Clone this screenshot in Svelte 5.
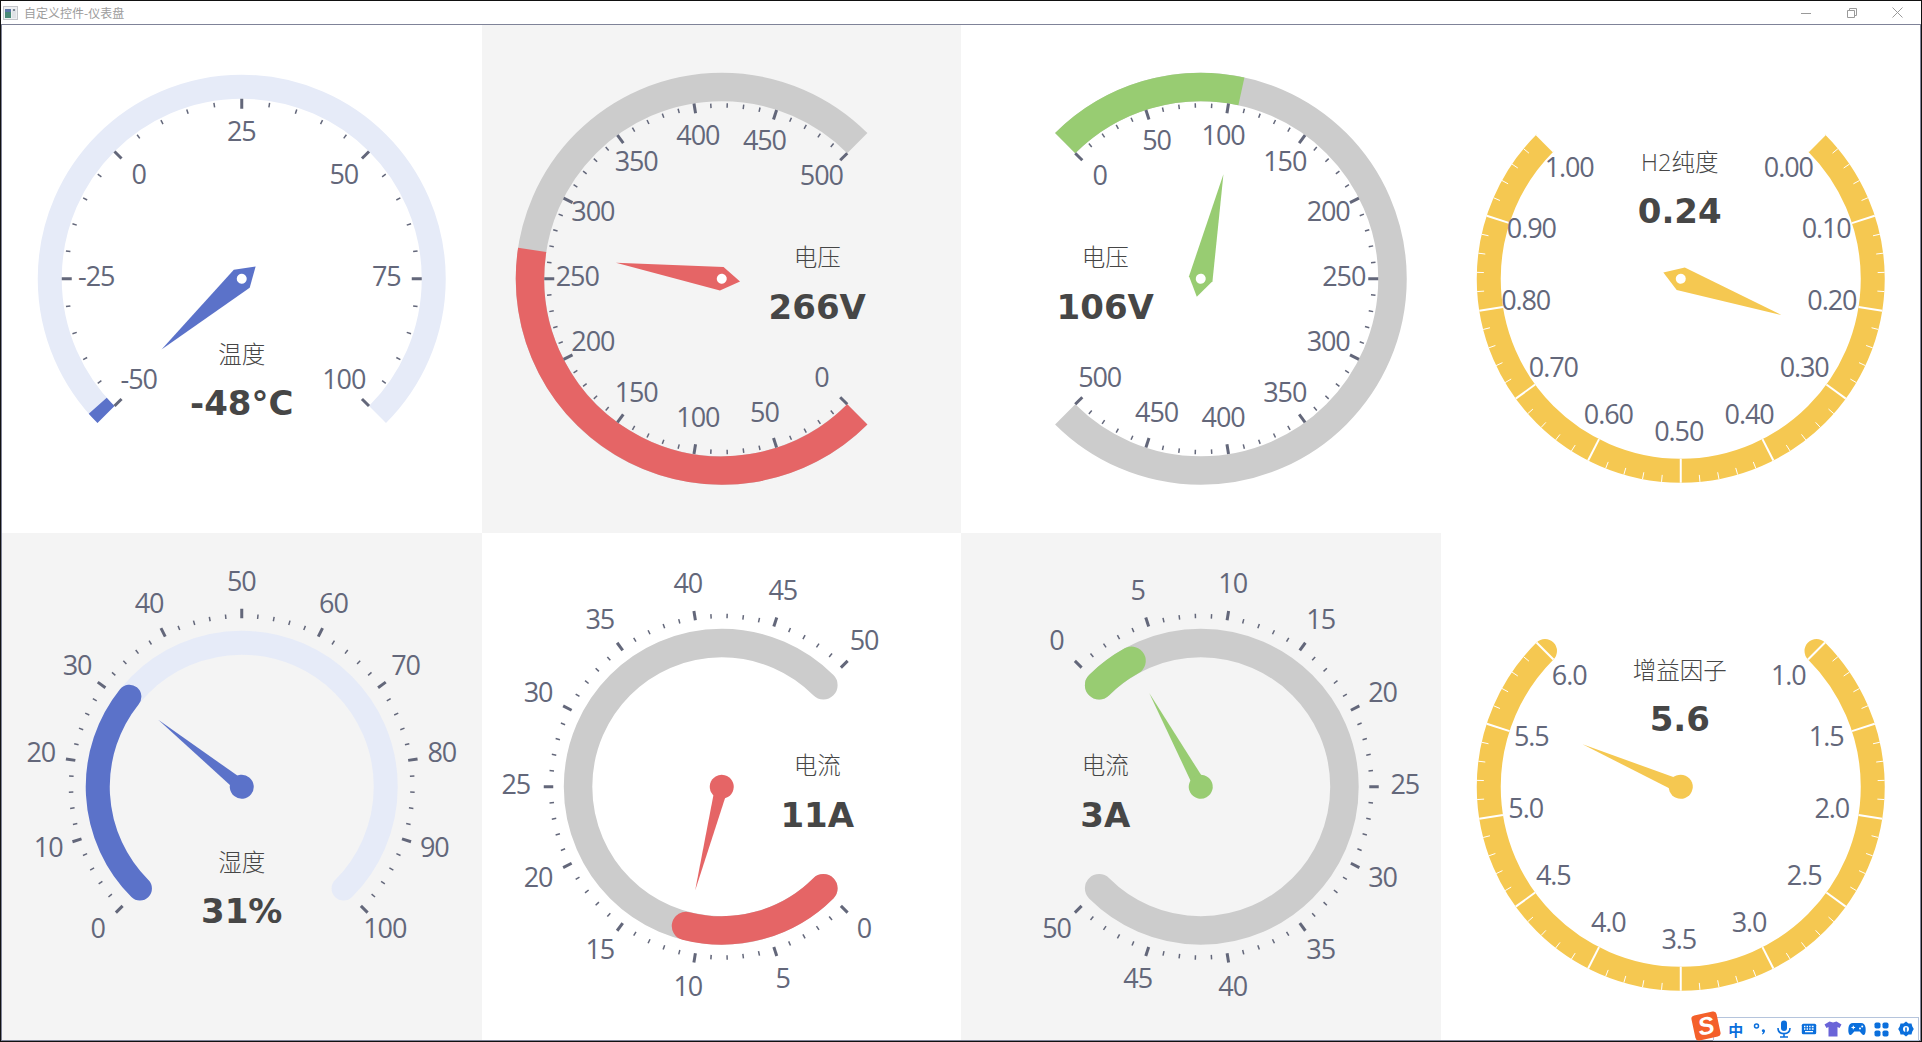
<script lang="ts">
  const CX = 239.75;
  const CY = 253.75;
  const BLUE = '#5b72c9';
  const RED = '#e56566';
  const GREEN = '#98cc72';
  const YELLOW = '#f5c851';
  const GRAY = '#cccccc';
  const PALE = '#e6ebf8';

  const gauges = [
    { title: '温度', text: '-48°C', value: -48, min: -50, max: 100, split: 6, start: 225, color: BLUE, track: PALE, radius: 192, width: 24, labelR: 145, labelDx: -0.5, ticks: 'in', pointer: 'arrow', place: 'bottom' },
    { title: '电压', text: '266V', value: 266, min: 0, max: 500, split: 10, start: -45, color: RED, track: GRAY, radius: 191.75, width: 28.5, labelR: 143, labelDx: -1.5, ticks: 'in', pointer: 'arrow', place: 'right', shaded: true },
    { title: '电压', text: '106V', value: 106, min: 0, max: 500, split: 10, start: 135, color: GREEN, track: GRAY, radius: 191.75, width: 28.5, labelR: 143, labelDx: 0, ticks: 'in', pointer: 'arrow', place: 'left' },
    { title: 'H2纯度', text: '0.24', value: 0.24, min: 0, max: 1, split: 10, start: 45, color: YELLOW, track: YELLOW, radius: 192, width: 24, labelR: 155, labelDx: -2, ticks: 'band', pointer: 'arrow', place: 'top', digits: 2 },
    { title: '湿度', text: '31%', value: 31, min: 0, max: 100, split: 10, start: 225, color: BLUE, track: PALE, radius: 144, width: 24, labelR: 203, labelDx: -0.5, ticks: 'out', pointer: 'needle', place: 'bottom', round: true, shaded: true },
    { title: '电流', text: '11A', value: 11, min: 0, max: 50, split: 10, start: -45, color: RED, track: GRAY, radius: 143.7, width: 28.5, labelR: 204, labelDx: -2, ticks: 'out', pointer: 'needle', place: 'right', round: true },
    { title: '电流', text: '3A', value: 3, min: 0, max: 50, split: 10, start: 135, color: GREEN, track: GRAY, radius: 143.7, width: 28.5, labelR: 204, labelDx: 0, ticks: 'out', pointer: 'needle', place: 'left', round: true, shaded: true },
    { title: '增益因子', text: '5.6', value: 5.6, min: 1, max: 6, split: 10, start: 45, color: YELLOW, track: YELLOW, radius: 192, width: 24, labelR: 155, labelDx: -2, ticks: 'band', pointer: 'needle', place: 'top', round: true, digits: 1 }
  ];

  const places = {
    bottom: { x: 0, title: 75, value: 124 },
    right: { x: 95.5, title: -21.5, value: 28 },
    left: { x: -95.5, title: -21.5, value: 28 },
    top: { x: -1, title: -117, value: -68 }
  };

  const polar = (r, deg) => {
    const a = (deg * Math.PI) / 180;
    return { x: CX + r * Math.cos(a), y: CY - r * Math.sin(a) };
  };

  const angleOf = (g, v) => g.start - ((v - g.min) / (g.max - g.min)) * 270;

  function arc(r, from, to) {
    const a = polar(r, from);
    const b = polar(r, to);
    const large = from - to > 180 ? 1 : 0;
    return `M${a.x} ${a.y}A${r} ${r} 0 ${large} 1 ${b.x} ${b.y}`;
  }

  // tick ranges per style: [inner, outer] radius
  const tickRange = (g, major) => {
    if (g.ticks === 'band') return major ? [180, 204] : [197, 204];
    if (g.ticks === 'out') return major ? [168.5, 178] : [168.5, 173];
    const edge = g.radius - g.width / 2;
    return major ? [edge - 10, edge] : [edge - 6.5, edge - 2];
  };

  function ticks(g) {
    const out = [];
    const total = g.split * 5;
    for (let i = 0; i <= total; i++) {
      const deg = g.start - (i / total) * 270;
      const major = i % 5 === 0;
      const [r0, r1] = tickRange(g, major);
      const a = polar(r0, deg);
      const b = polar(r1, deg);
      out.push({ a, b, major });
    }
    return out;
  }

  function labels(g) {
    const out = [];
    for (let i = 0; i <= g.split; i++) {
      const v = g.min + ((g.max - g.min) * i) / g.split;
      const p = polar(g.labelR, g.start - (i / g.split) * 270);
      out.push({ x: p.x + g.labelDx, y: p.y - 3, text: v.toFixed(g.digits ?? 0) });
    }
    return out;
  }

  const imeKeys = ['zh', 'punct', 'mic', 'keyboard', 'shirt', 'pad', 'apps', 'gear'];
</script>

<div class="window">
  <header class="titlebar">
    <div class="app-title">
      <svg class="app-icon" width="15" height="14" viewBox="0 0 15 14">
        <rect x="0.5" y="0.5" width="14" height="13" fill="#eef0f2" stroke="#c4c6ca" />
        <rect x="2" y="3" width="6" height="9" fill="#4a8a78" />
        <rect x="2" y="3" width="6" height="3" fill="#5b78a8" />
        <rect x="9" y="3" width="4" height="9" fill="#dfe2e6" />
        <rect x="10" y="3" width="2" height="2" fill="#7a8794" />
      </svg>
      <span>自定义控件-仪表盘</span>
    </div>
    <div class="controls">
      <svg width="10" height="10" viewBox="0 0 10 10"><path d="M0 5.5h10" stroke="#9a9a9a" /></svg>
      <svg width="10" height="10" viewBox="0 0 10 10" fill="none" stroke="#9a9a9a"><path d="M0.5 2.5h7v7h-7zM2.5 2.5v-2h7v7h-2" /></svg>
      <svg width="11" height="11" viewBox="0 0 11 11"><path d="M0.5 0.5l10 10M10.5 0.5l-10 10" stroke="#9a9a9a" /></svg>
    </div>
  </header>

  <main class="board">
    {#each gauges as g}
      {@const deg = angleOf(g, g.value)}
      {@const end = g.start - 270}
      {@const place = places[g.place]}
      <section class="cell" class:shaded={g.shaded}>
        <svg viewBox="0 0 479.5 507.5">
          <path d={arc(g.radius, g.start, end)} fill="none" stroke={g.track} stroke-width={g.width} stroke-linecap={g.round ? 'round' : 'butt'} />
          {#if g.ticks !== 'band'}
            <path d={arc(g.radius, g.start, deg)} fill="none" stroke={g.color} stroke-width={g.width} stroke-linecap={g.round ? 'round' : 'butt'} />
          {/if}

          {#each ticks(g) as t}
            <line
              x1={t.a.x} y1={t.a.y} x2={t.b.x} y2={t.b.y}
              class={g.ticks === 'band' ? 'tick-white' : 'tick'}
              stroke-width={g.ticks === 'band' ? (t.major ? 2 : 1) : (t.major ? 3 : 1.5)}
            />
          {/each}

          {#each labels(g) as l}
            <text class="label" x={l.x} y={l.y}>{l.text}</text>
          {/each}

          <g transform="translate({CX} {CY}) rotate({90 - deg})" fill={g.color}>
            {#if g.pointer === 'arrow'}
              <polygon points="0,-107 12,0 0,18.5 -12,0" />
              <circle r="5" fill="#fff" />
            {:else}
              <polygon points="0,-107 6,-10 -6,-10" />
              <circle r="12" />
            {/if}
          </g>

          <text class="title" x={CX + place.x} y={CY + place.title}>{g.title}</text>
          <text class="value" x={CX + place.x} y={CY + place.value}>{g.text}</text>
        </svg>
      </section>
    {/each}
  </main>

  <aside class="ime">
    <svg class="ime-logo" width="28" height="28" viewBox="0 0 24 24">
      <rect x="1" y="1" width="22" height="22" rx="3" fill="#f4602a" />
      <text x="12" y="19" class="ime-s">S</text>
    </svg>
    <div class="ime-bar">
      {#each imeKeys as key}
        <span class="ime-key">
          {#if key === 'zh'}
            <span class="ime-zh">中</span>
          {:else if key === 'punct'}
            <svg width="16" height="16" viewBox="0 0 16 16" fill="#0b6fdc">
              <circle cx="4.5" cy="5" r="2" fill="none" stroke="#0b6fdc" stroke-width="1.5" />
              <path d="M10.5 8.5c1.5-.6 3 .5 2.4 2.2-.4 1.2-1.3 2.2-2.5 2.9l-.5-.7c.7-.6 1.1-1.1 1.2-1.8-1.2.1-1.9-1.9-.6-2.6z" />
            </svg>
          {:else if key === 'mic'}
            <svg width="16" height="18" viewBox="0 0 16 18" fill="none" stroke="#0b6fdc" stroke-width="1.6">
              <rect x="5" y="0.5" width="6" height="10.5" rx="3" fill="#0b6fdc" stroke="none" />
              <path d="M2 8c0 3.6 2.6 5.6 6 5.6s6-2 6-5.6M8 13.6v3M4 17h8" />
            </svg>
          {:else if key === 'keyboard'}
            <svg width="16" height="12" viewBox="0 0 16 12">
              <rect x="0.8" y="0.8" width="14.4" height="10.4" rx="1.5" fill="#0b6fdc" />
              <path d="M3 3.5h1.4M5.6 3.5H7M8.2 3.5h1.4M10.8 3.5h1.8M3 6h1.4M5.6 6H7M8.2 6h1.4M10.8 6h1.8M4 8.6h8" stroke="#fff" stroke-width="1.3" />
            </svg>
          {:else if key === 'shirt'}
            <svg width="18" height="16" viewBox="0 0 18 16">
              <path d="M5.5 0.5l3.5 1 3.5-1 5 3-2 3.5-2-1v9.5h-9V6l-2 1-2-3.5z" fill="#6a64d8" />
            </svg>
          {:else if key === 'pad'}
            <svg width="18" height="14" viewBox="0 0 18 14">
              <path d="M5 1h8c2.6 0 4.2 2 4.5 4.5.3 2.6.4 7-1.8 7.5-1.7.3-2.7-2.5-4-3.5h-5.400c-1.3 1-2.3 3.800-4 3.500C.1 12.500.2 8.100.5 5.500.8 3 2.400 1 5 1z" fill="#0b6fdc" />
              <path d="M3.5 5.5h3.6M5.3 3.7v3.6" stroke="#fff" stroke-width="1.1" />
              <circle cx="12" cy="6.5" r="1" fill="#fff" />
              <circle cx="14.2" cy="4.5" r="1" fill="#fff" />
            </svg>
          {:else if key === 'apps'}
            <svg width="15" height="15" viewBox="0 0 15 15" fill="#0b6fdc">
              <rect x="0.5" y="0.5" width="6" height="6" rx="1.8" />
              <rect x="8.5" y="0.5" width="6" height="6" rx="1.8" />
              <rect x="0.5" y="8.5" width="6" height="6" rx="1.8" />
              <rect x="8.5" y="8.5" width="6" height="6" rx="1.8" />
            </svg>
          {:else}
            <svg width="16" height="16" viewBox="0 0 16 16">
              <path d="M8 0.5l2.5 2h3l.8 3 1.5 2.5-1.5 2.5-.8 3h-3L8 15.5l-2.5-2h-3l-.8-3L.2 8l1.5-2.5.8-3h3z" fill="#0b6fdc" />
              <circle cx="8" cy="8" r="3" fill="#fff" />
              <path d="M8 6.5v6" stroke="#0b6fdc" stroke-width="1.6" />
            </svg>
          {/if}
        </span>
      {/each}
    </div>
  </aside>
</div>

<style>
  :global(body) {
    margin: 0;
    background: #fff;
  }

  .window {
    position: relative;
    width: 1922px;
    height: 1042px;
    box-sizing: border-box;
    border: 1px solid #111;
    display: flex;
    flex-direction: column;
    overflow: hidden;
  }

  .titlebar {
    height: 23px;
    flex: none;
    background: #fff;
    display: flex;
    align-items: center;
    justify-content: space-between;
  }

  .app-title {
    display: flex;
    align-items: center;
    gap: 6px;
    padding-left: 2px;
    font: 12px/1 "Noto Sans CJK SC", "Noto Sans", sans-serif;
    color: #9c9c9c;
  }

  .app-icon {
    display: block;
  }

  .controls {
    display: flex;
    align-items: center;
    gap: 35.5px;
    padding-right: 18px;
  }

  .controls svg {
    display: block;
  }

  .board {
    flex: 1;
    min-height: 0;
    border: 1px solid #7f8398;
    display: grid;
    grid-template-columns: repeat(4, 1fr);
    grid-template-rows: repeat(2, 1fr);
    background: #fff;
  }

  .cell {
    min-width: 0;
    min-height: 0;
    background: #fff;
  }

  .cell.shaded {
    background: #f4f4f4;
  }

  .cell svg {
    display: block;
    width: 100%;
    height: 100%;
  }

  .tick {
    stroke: #63677a;
  }

  .tick-white {
    stroke: #fff;
  }

  .label {
    font-family: "Open Sans", "Noto Sans", sans-serif;
    font-size: 27px;
    letter-spacing: -1.1px;
    fill: #63677a;
    text-anchor: middle;
    dominant-baseline: central;
  }

  .title {
    font-family: "Open Sans", "Noto Sans CJK SC", sans-serif;
    font-size: 23.5px;
    font-weight: 300;
    fill: #464646;
    text-anchor: middle;
    dominant-baseline: central;
  }

  .value {
    font-family: "DejaVu Sans", sans-serif;
    font-size: 34px;
    font-weight: 700;
    fill: #464646;
    text-anchor: middle;
    dominant-baseline: central;
  }

  .ime {
    position: absolute;
    right: 2px;
    bottom: 0;
    display: flex;
    align-items: flex-end;
  }

  .ime-logo {
    display: block;
    margin-right: -7px;
    margin-bottom: 1px;
    transform: rotate(-12deg);
    position: relative;
    z-index: 1;
  }

  .ime-s {
    font: italic 700 21px "Liberation Sans", sans-serif;
    fill: #fff;
    text-anchor: middle;
  }

  .ime-bar {
    height: 24px;
    box-sizing: border-box;
    padding: 0 0 0 10px;
    display: flex;
    align-items: center;
    background: #fff;
    border: 1px solid #b5c4dc;
  }

  .ime-key {
    width: 24.3px;
    display: flex;
    align-items: center;
    justify-content: center;
  }

  .ime-key svg {
    display: block;
  }

  .ime-zh {
    font: 700 15px/1 "Noto Sans CJK SC", sans-serif;
    color: #0b6fdc;
  }
</style>
